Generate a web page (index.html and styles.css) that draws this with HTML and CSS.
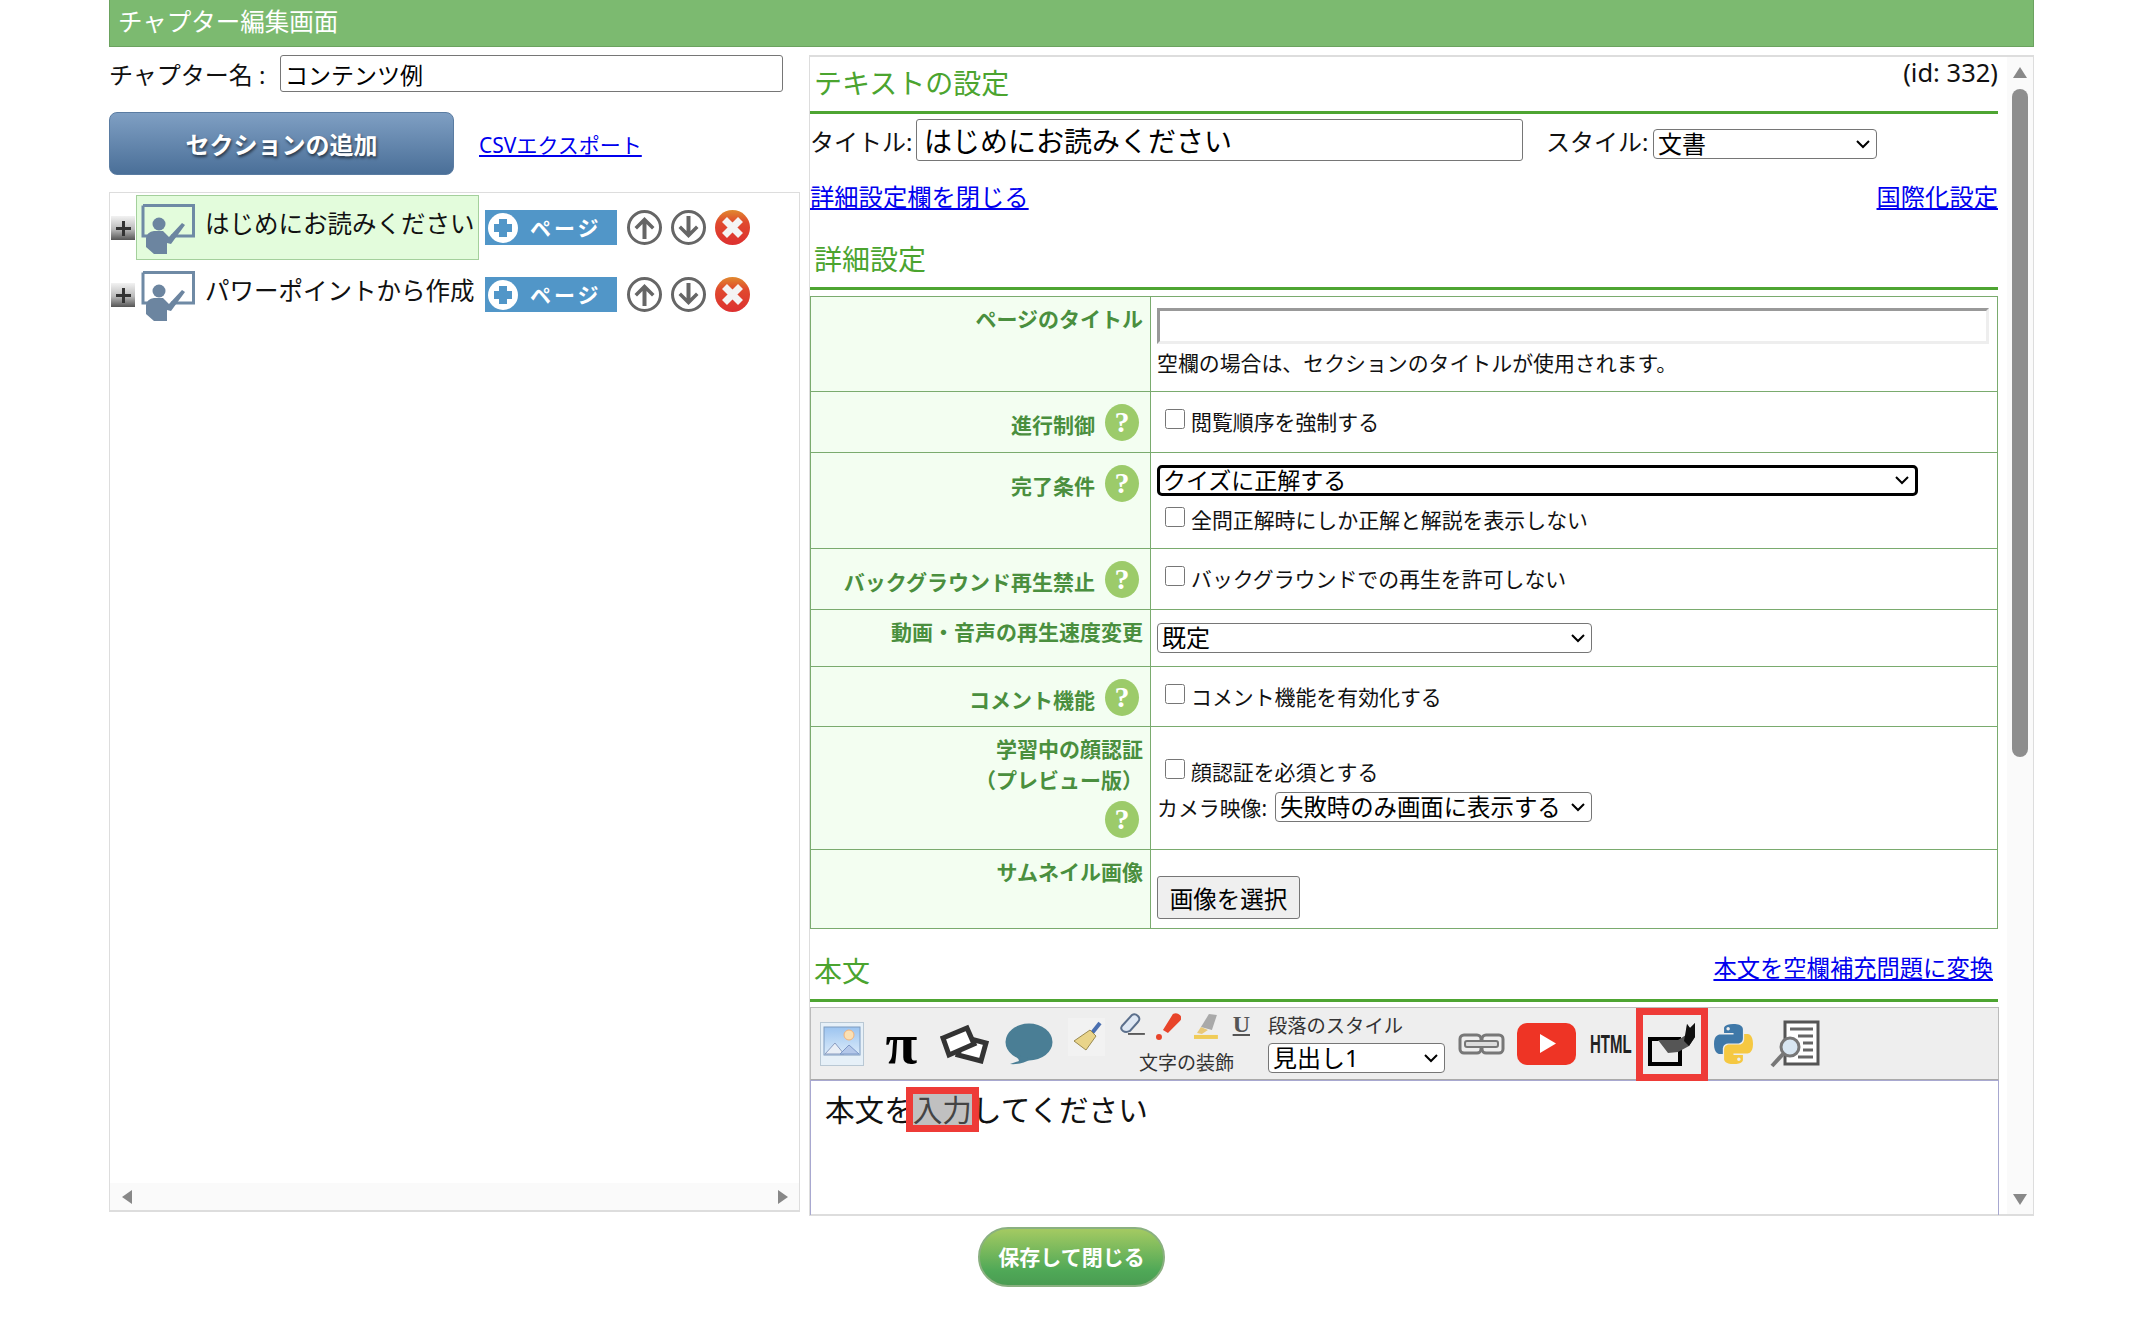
FILE: index.html
```html
<!DOCTYPE html>
<html lang="ja">
	<head>
		<meta charset="utf-8">
		<title>チャプター編集画面</title>
		<link rel="stylesheet" href="styles.css">
	</head>
	<body>
		<svg class="defs" aria-hidden="true">
			<defs>
				<linearGradient id="red-ball" x1="0" y1="0" x2="0" y2="1">
					<stop offset="0" stop-color="#e0892f"/>
					<stop offset="0.35" stop-color="#e04a2e"/>
					<stop offset="1" stop-color="#dd3030"/>
				</linearGradient>
				<linearGradient id="photo-bg" x1="0" y1="0" x2="0" y2="1">
					<stop offset="0" stop-color="#9cc4f0"/>
					<stop offset="1" stop-color="#dcecfa"/>
				</linearGradient>
				<symbol id="i-board" viewBox="0 0 54 54">
					<path fill="none" stroke="#6f8aa5" stroke-width="3" d="M2 3.5H52.5V34H30M12 34H2V3.5"/>
					<circle cx="18" cy="22" r="6.5" fill="#6c85a0"/>
					<path fill="#6c85a0" d="M5 36Q6 30 13 29H22L28 35L41 21L44 23L30 42L26 41V52H13L5 45Z"/>
				</symbol>
				<symbol id="i-plus" viewBox="0 0 24 24">
					<rect x="11" y="5" width="3" height="15" fill="#333"/>
					<rect x="5" y="11" width="15" height="3" fill="#333"/>
				</symbol>
				<symbol id="i-add" viewBox="0 0 30 30">
					<circle cx="15" cy="15" r="15" fill="#fff"/>
					<path fill="#5196c8" d="M11 6H19V11H24V19H19V24H11V19H6V11H11Z"/>
				</symbol>
				<symbol id="i-up" viewBox="0 0 35 35">
					<circle cx="17.5" cy="17.5" r="16" fill="#fff" stroke="#666" stroke-width="3"/>
					<path fill="#666" d="M15.5 29V14L10 19.5L7.5 17L17.5 7L27.5 17L25 19.5L19.5 14V29Z"/>
				</symbol>
				<symbol id="i-down" viewBox="0 0 35 35">
					<circle cx="17.5" cy="17.5" r="16" fill="#fff" stroke="#666" stroke-width="3"/>
					<path fill="#666" d="M15.5 6V21L10 15.5L7.5 18L17.5 28L27.5 18L25 15.5L19.5 21V6Z"/>
				</symbol>
				<symbol id="i-del" viewBox="0 0 35 35">
					<circle cx="17.5" cy="17.5" r="17.5" fill="url(#red-ball)"/>
					<path stroke="#f4f4f4" stroke-width="7" d="M9.5 9.5L25.5 25.5M25.5 9.5L9.5 25.5"/>
				</symbol>
			</defs>
		</svg>

		<div class="page">
			<div class="page-head">チャプター編集画面</div>

			<div class="main">
				<div class="left">
					<div class="name-row">
						<label class="name-label">チャプター名 :</label>
						<input class="name-input" type="text" value="コンテンツ例">
					</div>
					<div class="add-row">
						<button class="btn-add">セクションの追加</button>
						<a class="csv-link" href="#">CSVエクスポート</a>
					</div>

					<div class="tree-panel">
						<div class="tree">
							<div class="tree-row">
								<span class="expander"><svg width="24" height="24"><use href="#i-plus"/></svg></span>
								<div class="node node-on">
									<svg class="board" width="54" height="54"><use href="#i-board"/></svg>
									<span class="node-text">はじめにお読みください</span>
								</div>
								<span class="btn-page"><svg width="30" height="30"><use href="#i-add"/></svg><span>ページ</span></span>
								<svg class="ctl ctl-first" width="35" height="35"><use href="#i-up"/></svg>
								<svg class="ctl" width="35" height="35"><use href="#i-down"/></svg>
								<svg class="ctl" width="35" height="35"><use href="#i-del"/></svg>
							</div>
							<div class="tree-row">
								<span class="expander"><svg width="24" height="24"><use href="#i-plus"/></svg></span>
								<div class="node">
									<svg class="board" width="54" height="54"><use href="#i-board"/></svg>
									<span class="node-text">パワーポイントから作成</span>
								</div>
								<span class="btn-page"><svg width="30" height="30"><use href="#i-add"/></svg><span>ページ</span></span>
								<svg class="ctl ctl-first" width="35" height="35"><use href="#i-up"/></svg>
								<svg class="ctl" width="35" height="35"><use href="#i-down"/></svg>
								<svg class="ctl" width="35" height="35"><use href="#i-del"/></svg>
							</div>
						</div>
						<div class="hscroll">
							<span class="arrow-left"></span>
							<span class="arrow-right"></span>
						</div>
					</div>
				</div>

				<div class="right">
					<div class="content">
						<div class="sec-head">
							<h2>テキストの設定</h2>
							<span class="item-id">(id: 332)</span>
						</div>
						<div class="title-row">
							<label class="title-label">タイトル:</label>
							<input class="title-input" type="text" value="はじめにお読みください">
							<label class="style-label">スタイル:</label>
							<select class="style-select"><option>文書</option></select>
						</div>
						<div class="link-row">
							<a href="#">詳細設定欄を閉じる</a>
							<a href="#">国際化設定</a>
						</div>

						<div class="sec-head sec-next">
							<h2>詳細設定</h2>
						</div>
						<table class="detail">
							<colgroup><col class="col-label"><col></colgroup>
							<tr class="r1">
								<th>ページのタイトル</th>
								<td class="pad-11">
									<input class="page-title" type="text">
									<div class="hint">空欄の場合は、セクションのタイトルが使用されます。</div>
								</td>
							</tr>
							<tr class="r2">
								<th class="with-help"><div class="help-line"><span>進行制御</span><i class="help">?</i></div></th>
								<td class="pad-17"><label class="check"><input type="checkbox"><span>閲覧順序を強制する</span></label></td>
							</tr>
							<tr class="r3">
								<th class="with-help"><div class="help-line"><span>完了条件</span><i class="help">?</i></div></th>
								<td class="pad-12">
									<select class="cond-select"><option>クイズに正解する</option></select>
									<label class="check check-after"><input type="checkbox"><span>全問正解時にしか正解と解説を表示しない</span></label>
								</td>
							</tr>
							<tr class="r4">
								<th class="with-help"><div class="help-line"><span>バックグラウンド再生禁止</span><i class="help">?</i></div></th>
								<td class="pad-17"><label class="check"><input type="checkbox"><span>バックグラウンドでの再生を許可しない</span></label></td>
							</tr>
							<tr class="r5">
								<th>動画・音声の再生速度変更</th>
								<td class="pad-13"><select class="speed-select"><option>既定</option></select></td>
							</tr>
							<tr class="r6">
								<th class="with-help"><div class="help-line"><span>コメント機能</span><i class="help">?</i></div></th>
								<td class="pad-17"><label class="check"><input type="checkbox"><span>コメント機能を有効化する</span></label></td>
							</tr>
							<tr class="r7">
								<th>学習中の顔認証<br>（プレビュー版）<div class="help-alone"><i class="help">?</i></div></th>
								<td class="pad-32">
									<label class="check"><input type="checkbox"><span>顔認証を必須とする</span></label>
									<div class="camera-row">
										<label>カメラ映像:</label>
										<select class="camera-select"><option>失敗時のみ画面に表示する</option></select>
									</div>
								</td>
							</tr>
							<tr class="r8">
								<th>サムネイル画像</th>
								<td class="pad-26"><button class="btn-image">画像を選択</button></td>
							</tr>
						</table>

						<div class="sec-head sec-body">
							<h2>本文</h2>
							<a class="blank-link" href="#">本文を空欄補充問題に変換</a>
						</div>

						<div class="toolbar">
							<svg class="t-img" width="44" height="44" viewBox="0 0 44 44">
								<rect x="0.5" y="0.5" width="43" height="43" fill="#e6f0f8" stroke="#b9c8d4"/>
								<rect x="4" y="5" width="36" height="28" fill="url(#photo-bg)" stroke="#7f9cc0"/>
								<circle cx="29" cy="13" r="5" fill="#fbe0b4" stroke="#f2b27c"/>
								<path fill="#e8eef6" stroke="#8a9cc0" d="M5 32L15 21L24 32Z"/>
								<path fill="#b4c8ea" stroke="#7d98c8" d="M20 32L29 23L39 32Z"/>
							</svg>
							<span class="t-pi">π</span>
							<svg class="t-cards" width="51" height="40" viewBox="0 0 51 40">
								<path fill="#fff" stroke="#333" stroke-width="5" d="M24 13L47 19L42 37L19 31Z"/>
								<path fill="#fff" stroke="#333" stroke-width="5" d="M4 14L28 4L35 20L10 31Z"/>
							</svg>
							<svg class="t-bubble" width="48" height="42" viewBox="0 0 48 42">
								<ellipse cx="24" cy="19" rx="23.5" ry="18.5" fill="#4a7e95"/>
								<path fill="#4a7e95" d="M12 32L14 38L5 41Q16 42 26 36Z"/>
							</svg>
							<span class="t-broom">
								<svg width="37" height="38" viewBox="0 0 37 38">
									<rect width="37" height="38" fill="#f2f2f2"/>
									<path stroke="#4a6fb0" stroke-width="4" d="M32 5L24 15"/>
									<path fill="#e9d48a" stroke="#9a8a50" d="M22 12L28 18L18 32L6 23Z"/>
								</svg>
							</span>
							<div class="t-deco">
								<div class="deco-icons">
									<svg class="d-eraser" width="26" height="22" viewBox="0 0 26 22">
										<path fill="#dfe8f4" stroke="#5b6f8c" stroke-width="2" d="M3 13L13 2Q16 0 19 3T19 9L11 18Q7 20 4 18T3 13Z"/>
										<path stroke="#333" stroke-width="1.5" d="M9 21H26"/>
									</svg>
									<svg class="d-pen" width="26" height="27" viewBox="0 0 26 27">
										<path fill="#e8442a" d="M18 1Q22 -1 25 2T25 8L13 20L8 17Z"/>
										<circle cx="4" cy="24" r="3" fill="#e8442a"/>
									</svg>
									<svg class="d-marker" width="24" height="26" viewBox="0 0 24 26">
										<path fill="#a9a9a9" d="M15 1L23 2L18 17L7 14Z"/>
										<path fill="#e8c878" d="M7 14L14 17L8 21L3 20Z"/>
										<rect y="22" width="24" height="4" fill="#f0cc58"/>
									</svg>
									<span class="d-under">U</span>
								</div>
								<div class="deco-label">文字の装飾</div>
							</div>
							<div class="t-para">
								<div class="para-label">段落のスタイル</div>
								<select class="para-select"><option>見出し1</option></select>
							</div>
							<svg class="t-link" width="47" height="22" viewBox="0 0 47 22">
								<g fill="none">
									<rect x="2" y="2" width="21" height="18" rx="4" stroke="#777" stroke-width="3"/>
									<rect x="24" y="2" width="21" height="18" rx="4" stroke="#777" stroke-width="3"/>
									<rect x="7" y="8" width="33" height="6" rx="2" fill="#ddd" stroke="#777" stroke-width="2"/>
								</g>
							</svg>
							<svg class="t-yt" width="59" height="42" viewBox="0 0 59 42">
								<rect width="59" height="42" rx="10" fill="#ee3425"/>
								<path fill="#fff" d="M23 11L39 20.5L23 30Z"/>
							</svg>
							<span class="t-html">HTML</span>
							<div class="t-marked">
								<svg width="48" height="43" viewBox="0 0 48 43">
									<path fill="none" stroke="#000" stroke-width="4" d="M33 16H2V41H32V26"/>
									<path fill="#555" d="M10 17H30L38 12L39 1L42 5L47 0L47 14L41 23L30 29L20 30Z"/>
									<path fill="#111" d="M36 18L39 1L42 5L47 0L47 14L41 23Z"/>
								</svg>
							</div>
							<svg class="t-py" width="39" height="40" viewBox="0 0 24 24" preserveAspectRatio="none">
								<path fill="#3f78a8" d="M11.914 0C5.82 0 6.2 2.656 6.2 2.656l.007 2.752h5.814v.826H3.9S0 5.789 0 11.969c0 6.18 3.403 5.96 3.403 5.96h2.03v-2.867s-.109-3.42 3.35-3.42h5.766s3.24.052 3.24-3.148V3.202S18.28 0 11.913 0zM8.708 1.85c.578 0 1.046.47 1.046 1.052 0 .581-.468 1.051-1.046 1.051-.579 0-1.046-.47-1.046-1.051 0-.582.467-1.052 1.046-1.052z"/>
								<path fill="#f5c842" d="M12.087 24c6.092 0 5.712-2.656 5.712-2.656l-.007-2.752h-5.814v-.826h8.123s3.9.445 3.9-5.735c0-6.18-3.404-5.96-3.404-5.96h-2.03v2.867s.109 3.42-3.35 3.42H9.452s-3.24-.052-3.24 3.148v5.292S5.72 24 12.087 24zm3.206-1.85c-.578 0-1.046-.47-1.046-1.052 0-.581.468-1.051 1.046-1.051.579 0 1.046.47 1.046 1.051 0 .582-.467 1.052-1.046 1.052z"/>
							</svg>
							<svg class="t-find" width="50" height="48" viewBox="0 0 50 48">
								<path fill="#fff" stroke="#555" stroke-width="3" d="M15 2H48V44H15Z"/>
								<path stroke="#666" stroke-width="3" d="M20 9H43M28 16H43M33 23H43M33 30H43M28 37H43"/>
								<circle cx="20" cy="27" r="9" fill="#d8e6f2" stroke="#777" stroke-width="3"/>
								<path stroke="#777" stroke-width="4" d="M13 34L2 46"/>
							</svg>
						</div>

						<div class="editor">
							<p>本文を<span class="marked">入力</span>してください</p>
						</div>
					</div>

					<div class="vscroll">
						<span class="arrow-up"></span>
						<span class="thumb"></span>
						<span class="arrow-down"></span>
					</div>
				</div>
			</div>

			<div class="page-foot">
				<button class="btn-save">保存して閉じる</button>
			</div>
		</div>
	</body>
</html>
```

FILE: styles.css
```css
* {
	box-sizing: border-box;
}
body {
	margin: 0;
	background: #fff;
	color: #111;
	font-family: "Noto Sans", "Noto Sans CJK JP", sans-serif;
	font-size: 24px;
}
a {
	color: #0000ee;
}
input, select, button {
	font-family: inherit;
	color: #000;
}
/* chevron is drawn by hand so it has the same size on every select */
select {
	appearance: none;
	padding: 0 24px 0 4px;
	background: #fff url("data:image/svg+xml,%3Csvg xmlns='http://www.w3.org/2000/svg' width='14' height='9'%3E%3Cpath fill='none' stroke='%23000' stroke-width='2' d='M1 1L7 7L13 1'/%3E%3C/svg%3E") no-repeat right 6px center;
	border: 1px solid #767676;
	border-radius: 4px;
	line-height: 28px;
}
.defs {
	display: block;
	width: 0;
	height: 0;
}
.page {
	width: 1925px;
	margin-left: 109px;
}

/* header */
.page-head {
	height: 47px;
	padding-left: 8px;
	background: #7cba70;
	border: 1px solid #6ba25f;
	border-top: 0;
	color: #fff;
	font-size: 24.5px;
	line-height: 44px;
}
.main {
	display: flex;
	gap: 9px;
	height: 1161px;
	margin-top: 8px;
}

/* left column */
.left {
	display: flex;
	flex-direction: column;
	width: 691px;
}
.name-row {
	display: flex;
	align-items: center;
	height: 37px;
}
.name-label {
	width: 171px;
	white-space: nowrap;
}
.name-input {
	width: 503px;
	height: 37px;
	padding: 0 4px;
	border: 1px solid #767676;
	border-radius: 3px;
	font-size: 23px;
}
.add-row {
	display: flex;
	align-items: center;
	margin-top: 20px;
}
.btn-add {
	width: 345px;
	height: 63px;
	background: linear-gradient(#7f9fc3, #4a6f98);
	border: 1px solid #5a7ca2;
	border-radius: 8px;
	color: #fff;
	font-size: 24px;
	font-weight: bold;
	text-shadow: 1px 2px 3px rgba(0, 0, 0, 0.6);
}
.csv-link {
	margin: 1px 0 0 25px;
	font-size: 21px;
}
.tree-panel {
	display: flex;
	flex-direction: column;
	height: 1020px;
	margin-top: 17px;
	border: 1px solid #ddd;
	border-bottom-width: 2px;
}
.tree {
	flex: 1;
	padding: 2px 0 0 1px;
}
.tree-row {
	display: flex;
	align-items: flex-start;
	height: 65px;
	margin-bottom: 2px;
}
.expander {
	display: block;
	width: 24px;
	height: 24px;
	margin: 21px 1px 0 0;
	background: linear-gradient(#f2f2f2, #bbb 55%, #555);
}
.expander svg {
	display: block;
}
.node {
	display: flex;
	align-items: flex-start;
	width: 343px;
	height: 65px;
	padding: 6px 0 0 4px;
	border: 1px solid transparent;
}
.node-on {
	background: #e3fcdc;
	border-color: #a4d09c;
}
.board {
	flex: none;
}
.node-text {
	margin: 4px 0 0 10px;
	font-size: 24.5px;
	line-height: 36px;
	white-space: nowrap;
}
.btn-page {
	display: flex;
	align-items: center;
	width: 132px;
	height: 35px;
	margin: 15px 0 0 6px;
	padding: 0 0 2px 3px;
	background: #5196c8;
	color: #fff;
	font-size: 21px;
	font-weight: bold;
	letter-spacing: 3px;
}
.btn-page svg {
	margin-top: 2px;
}
.btn-page span {
	margin-left: 12px;
}
.ctl {
	flex: none;
	margin: 15px 0 0 9px;
}
.ctl-first {
	margin-left: 10px;
}
.hscroll {
	display: flex;
	justify-content: space-between;
	align-items: center;
	height: 27px;
	padding: 0 11px 0 12px;
	background: #fafafa;
}
.arrow-left {
	border: 7px solid transparent;
	border-left: 0;
	border-right: 10px solid #888;
}
.arrow-right {
	border: 7px solid transparent;
	border-right: 0;
	border-left: 10px solid #888;
}

/* right column */
.right {
	display: flex;
	width: 1225px;
	border: 1px solid #ddd;
	border-width: 2px 1px;
}
.content {
	width: 1197px;
	padding-right: 9px;
}
.sec-head {
	display: flex;
	justify-content: space-between;
	align-items: flex-start;
	height: 57px;
	border-bottom: 3px solid #4ea532;
}
.sec-head h2 {
	margin: 8px 0 0 4px;
	color: #4ba42f;
	font-size: 28px;
	font-weight: normal;
	line-height: 36px;
}
.item-id {
	font-size: 25.5px;
	line-height: 30px;
}
.title-row {
	display: flex;
	align-items: flex-start;
	margin-top: 5px;
}
.title-label {
	width: 106px;
	margin-top: 8px;
	line-height: 30px;
	white-space: nowrap;
}
.title-input {
	width: 607px;
	height: 42px;
	padding: 0 7px;
	border: 1px solid #767676;
	border-radius: 3px;
	font-size: 28px;
}
.style-label {
	width: 107px;
	margin: 8px 0 0 23px;
	line-height: 30px;
	white-space: nowrap;
}
.style-select {
	width: 224px;
	height: 30px;
	margin-top: 10px;
	font-size: 24px;
}
.link-row {
	display: flex;
	justify-content: space-between;
	margin-top: 21px;
	font-size: 24.3px;
	line-height: 30px;
}
.sec-next {
	margin-top: 21px;
}
.detail {
	width: 1188px;
	margin-top: 6px;
	border-collapse: collapse;
	table-layout: fixed;
}
.col-label {
	width: 340px;
}
.detail th, .detail td {
	border: 1px solid #7aab6e;
	vertical-align: top;
}
.detail th {
	padding: 7px 7px 0 0;
	background: #f3fef1;
	color: #4a8f3e;
	font-size: 21px;
	line-height: 31px;
	text-align: right;
	white-space: nowrap;
}
.detail td {
	padding-left: 6px;
	padding-right: 6px;
	font-size: 20.9px;
}
.r1 { height: 95px; }
.r2 { height: 61px; }
.r3 { height: 96px; }
.r4 { height: 61px; }
.r5 { height: 57px; }
.r6 { height: 60px; }
.r7 { height: 123px; }
.r8 { height: 79px; }
.detail td.pad-11 { padding-top: 11px; }
.detail td.pad-12 { padding-top: 12px; }
.detail td.pad-13 { padding-top: 13px; }
.detail td.pad-17 { padding-top: 17px; }
.detail td.pad-26 { padding-top: 26px; }
.detail td.pad-32 { padding-top: 32px; }
.detail th.with-help {
	padding-top: 12px;
	padding-right: 11px;
}
.help-line {
	display: flex;
	justify-content: flex-end;
	align-items: flex-start;
	gap: 10px;
}
.help-line span {
	margin-top: 6px;
}
.help-alone {
	display: flex;
	justify-content: flex-end;
	margin: 5px 4px 0 0;
}
.help {
	display: block;
	width: 34px;
	height: 37px;
	background: #9ccb6a;
	border-radius: 50%;
	color: #fff;
	font-family: "Liberation Serif", serif;
	font-size: 30px;
	font-style: normal;
	line-height: 36px;
	text-align: center;
}
.page-title {
	display: block;
	width: 832px;
	height: 36px;
	border: 3px solid;
	border-color: #999 #eee #eee #999;
}
.hint {
	margin-top: 5px;
	line-height: 28px;
}
.check {
	display: flex;
	align-items: flex-start;
	line-height: 27px;
}
.check input {
	flex: none;
	width: 20px;
	height: 20px;
	margin: 0 6px 0 8px;
}
.check-after {
	margin-top: 11px;
}
.detail .cond-select {
	display: block;
	width: 761px;
	height: 31px;
	border: 3px solid #000;
	border-radius: 5px;
	font-size: 23px;
	line-height: 25px;
	padding-left: 3px;
}
.speed-select {
	display: block;
	width: 435px;
	height: 30px;
	font-size: 24px;
}
.camera-row {
	display: flex;
	align-items: center;
	margin-top: 6px;
}
.camera-row label {
	width: 118px;
	white-space: nowrap;
}
.camera-select {
	width: 317px;
	height: 30px;
	font-size: 23.4px;
}
.btn-image {
	display: block;
	width: 143px;
	height: 43px;
	padding: 0;
	background: #efefef;
	border: 1px solid #767676;
	border-radius: 3px;
	font-size: 23.5px;
}
.sec-body {
	margin-top: 16px;
}
.blank-link {
	margin: 8px 5px 0 0;
	font-size: 23.3px;
	line-height: 30px;
}

/* editor toolbar */
.toolbar {
	display: flex;
	align-items: center;
	height: 73px;
	margin: 5px -1px 0 0;
	background: #eee;
	border: 1px solid #bbb;
	border-bottom-color: #aaa;
}
.toolbar > svg, .toolbar > span, .toolbar > div {
	flex: none;
}
.t-img { margin-left: 9px; }
.t-pi {
	width: 33px;
	margin-left: 21px;
	color: #000;
	font-family: "Liberation Serif", serif;
	font-size: 58px;
	font-weight: bold;
	line-height: 44px;
	text-align: center;
}
.t-cards { margin-left: 21px; }
.t-bubble { margin-left: 15px; }
.t-broom {
	display: block;
	height: 38px;
	margin: 0 0 14px 15px;
}
.t-broom svg {
	display: block;
}
.t-deco {
	align-self: flex-start;
	width: 131px;
	margin: 5px 0 0 14px;
}
.deco-icons {
	display: flex;
	height: 27px;
}
.d-pen { margin-left: 10px; }
.d-marker { margin-left: 13px; }
.d-under {
	margin-left: 15px;
	color: #555;
	font-family: "Liberation Serif", serif;
	font-size: 24px;
	font-weight: bold;
	line-height: 22px;
	text-decoration: underline;
}
.deco-label {
	margin: 11px 0 0 20px;
	color: #333;
	font-size: 19px;
	line-height: 24px;
	white-space: nowrap;
}
.t-para {
	align-self: flex-start;
	width: 177px;
	margin: 6px 0 0 18px;
}
.para-label {
	color: #333;
	font-size: 19.3px;
	line-height: 24px;
	white-space: nowrap;
}
.para-select {
	display: block;
	width: 177px;
	height: 30px;
	margin-top: 5px;
	font-size: 24px;
}
.t-link { margin-left: 13px; }
.t-yt { margin-left: 12px; }
.t-html {
	width: 41px;
	margin-left: 14px;
	color: #222;
	font-family: "Liberation Sans", sans-serif;
	font-size: 25px;
	font-weight: bold;
	line-height: 20px;
	transform: scaleX(0.6);
	transform-origin: left center;
}
.t-marked {
	display: flex;
	justify-content: center;
	align-items: center;
	width: 72px;
	height: 73px;
	margin: 1px 0 0 5px;
	border: 7px solid #ee3b37;
}
.t-py { margin-left: 6px; }
.t-find { margin-left: 17px; }

/* editor body */
.editor {
	height: 135px;
	margin-right: -1px;
	overflow: hidden;
	border: 1px solid #a8a8d0;
	border-bottom: 0;
}
.editor p {
	margin: 13px 0 0 14px;
	font-size: 29.6px;
	line-height: 31px;
}
.marked {
	display: inline-block;
	margin-left: -1px;
	background: #c0c0c0;
	color: #444;
	outline: 7px solid #ee3b37;
}

/* vertical scrollbar */
.vscroll {
	display: flex;
	flex-direction: column;
	align-items: center;
	width: 26px;
	padding-top: 10px;
	background: #fafafa;
}
.arrow-up {
	border: 7px solid transparent;
	border-top: 0;
	border-bottom: 11px solid #888;
}
.thumb {
	width: 16px;
	height: 668px;
	margin-top: 11px;
	background: #8e8e8e;
	border-radius: 8px;
}
.arrow-down {
	margin-top: auto;
	margin-bottom: 9px;
	border: 7px solid transparent;
	border-bottom: 0;
	border-top: 11px solid #888;
}

/* footer */
.page-foot {
	margin-top: 11px;
	padding-left: 869px;
}
.btn-save {
	width: 187px;
	height: 60px;
	padding: 0 0 3px;
	background: linear-gradient(#a4ca62, #4fa857 75%, #4a9c52);
	border: 2px solid #8ab080;
	border-radius: 30px;
	color: #fff;
	font-size: 21px;
	font-weight: bold;
}
```
